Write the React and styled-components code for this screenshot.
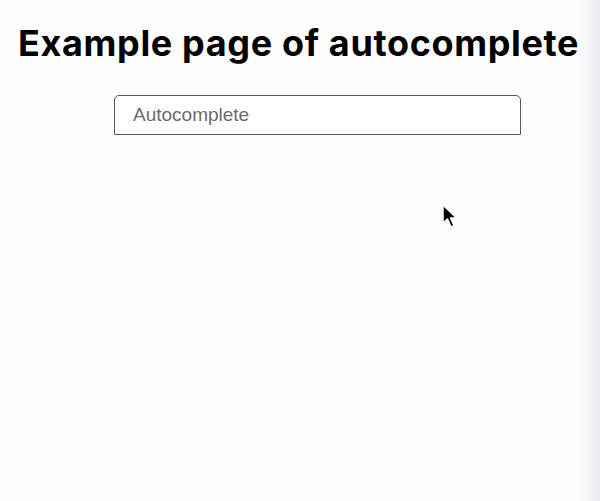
import React from 'react'
import styled, { createGlobalStyle } from 'styled-components';

const Global = createGlobalStyle`
  html, body {
    margin: 0;
    padding: 0;
    height: 100%;
  }
  body {
    background: linear-gradient(to right, #fefdfe 0px, #fefdfe 574px, #f8f7f9 588px, #e8e7e9 600px);
    font-family: Inter, "Liberation Sans", sans-serif;
  }
`;

const Page = styled.div`
  position: relative;
  width: 600px;
  height: 501px;
  overflow: hidden;
`;

const Title = styled.h1`
  margin: 0;
  padding-top: 21px;
  padding-left: 18px;
  font-size: 36px;
  font-weight: 700;
  line-height: 44px;
  letter-spacing: 0.65px;
  color: #000;
  white-space: nowrap;
`;

const Form = styled.form`
  padding: 30px 0 0 114px;
`;

const Input = styled.input`
  box-sizing: border-box;
  width: 407px;
  height: 40px;
  padding: 0 18px;
  border: 1.5px solid #5a5a5c;
  border-radius: 5px 5px 0 0;
  background: #fff;
  font-family: "Liberation Sans", Arial, sans-serif;
  font-size: 19px;
  color: #333;
  outline: none;
  &::placeholder {
    color: #6b6b6d;
  }
`;

const Pointer = styled.svg`
  position: absolute;
  left: 441px;
  top: 204px;
`;

function App() {
  return (
    <Page>
      <Global />
      <Title>Example page of autocomplete</Title>
      <Form onSubmit={e => e.preventDefault()}>
        <Input placeholder="Autocomplete" />
      </Form>
      <Pointer width="18" height="26" viewBox="0 0 18 26">
        <path d="M2 1 L2 19 L6.5 15 L10 23 L13 21.6 L9.6 14 L15.5 14 Z" fill="#000" stroke="#fff" strokeWidth="1.5" strokeLinejoin="round" />
      </Pointer>
    </Page>
  )
}

export default App;
